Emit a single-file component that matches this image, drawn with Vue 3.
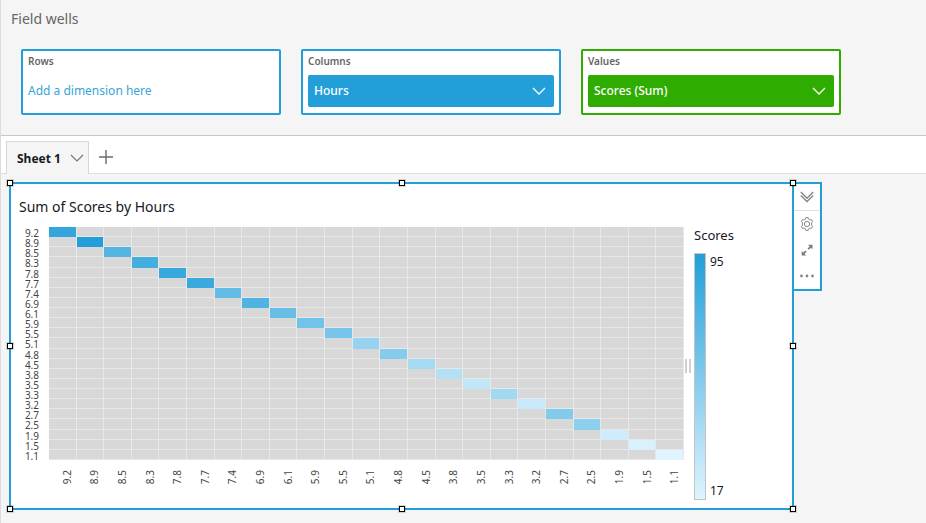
<script setup>
const wells = [
  { id: 'rows', name: 'Rows', kind: 'dimension', field: null },
  { id: 'columns', name: 'Columns', kind: 'dimension', field: 'Hours' },
  { id: 'values', name: 'Values', kind: 'measure', field: 'Scores (Sum)' },
]

const points = [
  ['9.2', 88], ['8.9', 95], ['8.5', 75], ['8.3', 81], ['7.8', 86], ['7.7', 85],
  ['7.4', 69], ['6.9', 76], ['6.1', 67], ['5.9', 62], ['5.5', 60], ['5.1', 47],
  ['4.8', 54], ['4.5', 41], ['3.8', 35], ['3.5', 30], ['3.3', 42], ['3.2', 27],
  ['2.7', 55], ['2.5', 51], ['1.9', 24], ['1.5', 20], ['1.1', 17],
].map(([hours, score]) => ({ hours, score }))

const low = [223, 244, 254]
const high = [34, 159, 217]
const minScore = 17
const maxScore = 95

function shade(score) {
  const t = (score - minScore) / (maxScore - minScore)
  return `rgb(${low.map((c, i) => Math.round(c + (high[i] - c) * t)).join(',')})`
}

// One entry per cell; only the diagonal holds data.
const cells = points.flatMap((row, r) =>
  points.map((_, c) => ({ key: `${r}-${c}`, filled: r === c, style: r === c ? { color: shade(row.score) } : null })),
)

const handles = ['nw', 'n', 'ne', 'w', 'e', 'sw', 's', 'se']
</script>

<template>
  <div class="app">
    <section class="field-wells">
      <h2>Field wells</h2>
      <div class="wells">
        <div v-for="well in wells" :key="well.id" class="well" :class="well.kind">
          <h3>{{ well.name }}</h3>
          <button v-if="well.field" type="button" class="pill">
            <span>{{ well.field }}</span>
            <svg width="14" height="10" viewBox="0 0 14 10" aria-hidden="true">
              <path d="M1 3l6 6 6-6" fill="none" stroke="currentColor" stroke-width="1.3" />
            </svg>
          </button>
          <button v-else type="button" class="pill empty">Add a dimension here</button>
        </div>
      </div>
    </section>

    <nav class="sheet-bar">
      <button type="button" class="tab">
        <span>Sheet 1</span>
        <svg width="14" height="8" viewBox="0 0 14 8" aria-hidden="true">
          <path d="M1 1l6 6 6-6" fill="none" stroke="#777" stroke-width="1.2" />
        </svg>
      </button>
      <button type="button" class="add" aria-label="Add sheet">
        <svg width="14" height="14" viewBox="0 0 14 14" aria-hidden="true">
          <path d="M7 0v14M0 7h14" fill="none" stroke="#6a6a6a" stroke-width="1.4" />
        </svg>
      </button>
    </nav>

    <main class="canvas">
      <article class="visual">
        <h1>Sum of Scores by Hours</h1>
        <div class="body">
          <div class="chart">
            <div class="y-axis">
              <span v-for="p in points" :key="p.hours">{{ p.hours }}</span>
            </div>
            <div class="plot">
              <i v-for="cell in cells" :key="cell.key" :class="{ filled: cell.filled }" :style="cell.style"></i>
            </div>
            <div class="x-axis">
              <span v-for="p in points" :key="p.hours"><b>{{ p.hours }}</b></span>
            </div>
          </div>
          <div class="splitter"><i></i><i></i></div>
          <div class="legend">
            <h2>Scores</h2>
            <div class="scale">
              <div class="ramp"></div>
              <div class="range">
                <span>{{ maxScore }}</span>
                <span>{{ minScore }}</span>
              </div>
            </div>
          </div>
        </div>
        <span v-for="h in handles" :key="h" class="handle" :class="h"></span>
      </article>

      <aside class="tools">
        <button type="button" class="collapse" aria-label="Collapse">
          <svg width="14" height="12" viewBox="0 0 14 12" aria-hidden="true">
            <path d="M.8 1L7 7.2 13.2 1M.8 4.4L7 10.6l6.2-6.2" fill="none" stroke="#858585" stroke-width="1.4" />
          </svg>
        </button>
        <button type="button" aria-label="Settings">
          <svg width="14" height="14" viewBox="0 0 14 14" aria-hidden="true">
            <g fill="none" stroke="#858585" stroke-width="1" stroke-linejoin="round">
              <path d="M5.4 2.1L5.9.6h2.2l.5 1.5 1.3.8 1.6-.3 1.1 1.8L11.6 5.7v2.6l1 1.3-1.1 1.8-1.6-.3-1.3.8-.5 1.5H5.9l-.5-1.5-1.3-.8-1.6.3L1.4 9.6l1-1.3V5.7l-1-1.3 1.1-1.8 1.6.3z" />
              <circle cx="7" cy="7" r="2.6" />
            </g>
          </svg>
        </button>
        <button type="button" aria-label="Maximize">
          <svg width="12" height="12" viewBox="0 0 12 12" aria-hidden="true">
            <path d="M7 .8h4.5v4.5L9.9 3.7 7.8 5.8 6.5 4.5l2.1-2.1zM.7 6.9l1.6 1.6 2.1-2.1 1.3 1.3-2.1 2.1 1.6 1.6H.7z" fill="#7c7c7c" />
          </svg>
        </button>
        <button type="button" aria-label="More options">
          <svg width="14" height="4" viewBox="0 0 14 4" aria-hidden="true">
            <g fill="#858585">
              <circle cx="1.5" cy="2" r="1.4" />
              <circle cx="7" cy="2" r="1.4" />
              <circle cx="12.5" cy="2" r="1.4" />
            </g>
          </svg>
        </button>
      </aside>
    </main>
  </div>
</template>

<style>
body {
  background: #f5f5f5;
}
</style>

<style scoped>
.app {
  box-sizing: border-box;
  min-height: 100vh;
  border-left: 1px solid #dcdcdc;
  background: #f5f5f5;
  color: #16191f;
  font-family: "Noto Sans", "Open Sans", sans-serif;
}
.app * {
  box-sizing: border-box;
}
h1,
h2,
h3 {
  margin: 0;
  font-weight: 400;
}
button {
  margin: 0;
  padding: 0;
  border: 0;
  background: none;
  font: inherit;
  color: inherit;
  cursor: pointer;
}
svg {
  display: block;
  flex: none;
}
.field-wells {
  padding: 9px 20px 20px;
  border-bottom: 1px solid #c8c8c8;
}
.field-wells h2 {
  margin: 0 0 20px -10px;
  font-size: 14px;
  line-height: 20px;
  color: #666;
}
.wells {
  display: flex;
  flex-wrap: wrap;
  gap: 20px;
}
.well {
  width: 260px;
  padding: 3px 5px 6px;
  border: 2px solid #229fd9;
  border-radius: 2px;
  background: #fff;
}
.well.measure {
  border-color: #2ead00;
}
.well h3 {
  margin-bottom: 7px;
  font-size: 10px;
  line-height: 14px;
  font-weight: 600;
  color: #666;
}
.pill {
  display: flex;
  align-items: center;
  justify-content: space-between;
  width: 100%;
  height: 32px;
  padding: 0 8px 2px 6px;
  border-radius: 2px;
  background: #229fd9;
  color: #fff;
  font-size: 12px;
  font-weight: 500;
}
.measure .pill {
  background: #2ead00;
}
.pill.empty {
  padding-left: 0;
  background: none;
  color: #3aa3d8;
  font-weight: 400;
}
.sheet-bar {
  display: flex;
  align-items: flex-end;
  padding: 5px 5px 0;
  border-bottom: 1px solid #e0e0e0;
  background: #fff;
}
.tab {
  display: flex;
  align-items: center;
  gap: 9px;
  height: 33px;
  margin-bottom: -1px;
  padding: 0 4px 0 10px;
  border: 1px solid #d8d8d8;
  border-bottom: 0;
  background: #f5f5f5;
  font-size: 12px;
  font-weight: 700;
}
.add {
  display: flex;
  align-items: center;
  height: 32px;
  padding: 0 10px;
}
.canvas {
  display: flex;
  align-items: flex-start;
  padding: 8px 104px 13px 8px;
}
.visual {
  position: relative;
  flex: 1;
  min-width: 0;
  border: 2px solid #229fd9;
  background: #fff;
}
.visual h1 {
  padding: 13px 8px 10px;
  font-size: 14px;
  line-height: 20px;
}
.body {
  display: flex;
}
.chart {
  flex: 1;
  min-width: 0;
  display: grid;
  grid-template-columns: 38px 1fr;
  grid-template-rows: 233px 48px;
  font-size: 10px;
  line-height: 10px;
  color: #444;
}
.y-axis {
  display: grid;
  grid-auto-rows: 1fr;
  padding-right: 10px;
  text-align: right;
  transform: translateY(1px);
}
.plot {
  display: grid;
  grid-template: repeat(23, 1fr) / repeat(23, 1fr);
  gap: 1px;
  padding: 0 1px 1px 0;
  background: #e8e8e8;
}
.plot i {
  background: #d8d8d8;
}
.plot i.filled {
  background: currentColor;
  box-shadow: 0 1px 0 currentColor;
}
.x-axis {
  grid-column: 2;
  display: grid;
  grid-auto-flow: column;
  grid-auto-columns: 1fr;
  padding-top: 10px;
  transform: translateX(4px);
}
.x-axis span {
  display: flex;
  justify-content: center;
  align-items: flex-start;
}
.x-axis b {
  font-weight: 400;
  writing-mode: vertical-rl;
  transform: rotate(180deg);
}
.splitter {
  display: flex;
  gap: 2px;
  width: 10px;
  padding: 132px 3px 0 1px;
}
.splitter i {
  width: 2px;
  height: 14px;
  background: #d0d0d0;
}
.legend {
  width: 98px;
}
.legend h2 {
  margin-bottom: 10px;
  font-size: 13px;
  line-height: 16px;
}
.scale {
  display: flex;
  gap: 4px;
}
.ramp {
  width: 12px;
  height: 247px;
  border: 1px solid #c4c4c4;
  background: linear-gradient(#229fd9, #dff4fe);
}
.range {
  display: flex;
  flex-direction: column;
  justify-content: space-between;
  font-size: 12px;
  line-height: 18px;
}
.handle {
  position: absolute;
  width: 6px;
  height: 6px;
  margin: -4px;
  border: 1px solid #000;
  background: #fff;
  box-shadow: 0 0 0 1px rgba(0, 0, 0, 0.15);
}
.nw, .n, .ne { top: 0; }
.w, .e { top: 50%; margin-top: -3px; }
.sw, .s, .se { bottom: 0; }
.nw, .w, .sw { left: 0; }
.n, .s { left: 50%; margin-left: -3px; }
.ne, .e, .se { right: 0; }
.tools {
  display: flex;
  flex-direction: column;
  width: 30px;
  margin-left: -2px;
  border: 2px solid #229fd9;
  background: #fff;
}
.tools button {
  display: flex;
  align-items: center;
  justify-content: center;
  height: 26px;
}
.tools .collapse {
  height: 27px;
  border-bottom: 1px solid #e0e0e0;
}
</style>
